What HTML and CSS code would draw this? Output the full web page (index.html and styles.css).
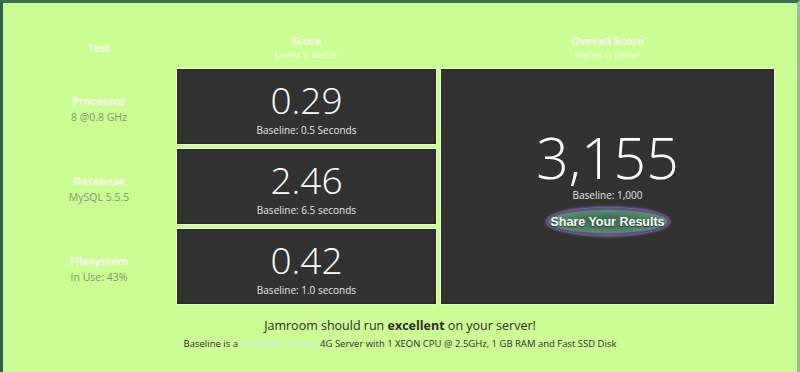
FILE: index.html
```html
<!DOCTYPE html>
<html lang="en">
<head>
  <meta charset="UTF-8" />
  <meta name="viewport" content="width=device-width, initial-scale=1.0"/>
  <title>Jamroom Benchmark</title>
  <link rel="stylesheet" href="styles.css">
</head>
<body>
  <div class="bench">
    <div class="head head-test">
      <div class="head-title">Test</div>
    </div>
    <div class="head">
      <div class="head-title">Score</div>
      <div class="head-sub">Lower Is Better</div>
    </div>
    <div class="head">
      <div class="head-title">Overall Score</div>
      <div class="head-sub">Higher Is Better</div>
    </div>

    <div class="test">
      <div class="test-name">Processor</div>
      <div class="test-info">8 @0.8 GHz</div>
    </div>
    <div class="card score">
      <div class="score-num">0.29</div>
      <div class="score-base">Baseline: 0.5 Seconds</div>
    </div>

    <div class="card overall">
      <div class="overall-num">3,155</div>
      <div class="overall-base">Baseline: 1,000</div>
      <button type="button" class="share">Share Your Results</button>
    </div>

    <div class="test">
      <div class="test-name">Database</div>
      <div class="test-info">MySQL 5.5.5</div>
    </div>
    <div class="card score">
      <div class="score-num">2.46</div>
      <div class="score-base">Baseline: 6.5 seconds</div>
    </div>

    <div class="test">
      <div class="test-name">Filesystem</div>
      <div class="test-info">In Use: 43%</div>
    </div>
    <div class="card score">
      <div class="score-num">0.42</div>
      <div class="score-base">Baseline: 1.0 seconds</div>
    </div>
  </div>

  <div class="summary">
    <p class="verdict">Jamroom should run <b>excellent</b> on your server!</p>
    <p class="note">Baseline is a <a href="#">Jamroom Hosting</a> 4G Server with 1 XEON CPU @ 2.5GHz, 1 GB RAM and Fast SSD Disk</p>
  </div>
</body>
</html>
```

FILE: styles.css
```css
* {
  box-sizing: border-box;
}

html, body {
  height: 100%;
}

body {
  margin: 0;
  font-family: 'Open Sans', 'Noto Sans', sans-serif;
  background-color: #ccfc94;
  border-top: 3px solid #3e6c52;
  border-left: 3px solid #2f5d45;
  border-right: 3px solid #a2b7a0;
}

.bench {
  display: grid;
  grid-template-columns: 170px 261px 335px;
  grid-template-rows: 62px 77px 77px 77px;
  gap: 3px;
}

.head {
  display: flex;
  flex-direction: column;
  align-items: center;
  justify-content: center;
  padding: 28px 0 2px;
  color: #f6ffec;
}

.head-test {
  padding-left: 22px;
}

.head-title {
  font-size: 11px;
  font-weight: bold;
  line-height: 15px;
}

.head-sub {
  font-size: 9px;
  line-height: 14px;
  color: #f2ffe6;
}

.test {
  display: flex;
  flex-direction: column;
  align-items: center;
  justify-content: center;
  padding: 4px 0 0 22px;
}

.test-name {
  font-size: 11px;
  font-weight: bold;
  line-height: 16px;
  color: #f6ffec;
}

.test-info {
  font-size: 10.5px;
  line-height: 16px;
  color: #7c9a6e;
}

.card {
  background-color: #323232;
  border: 1px solid #e6fdd0;
  box-shadow: inset 0 0 2px rgba(0, 0, 0, 0.6);
  color: #fff;
  text-align: center;
}

.score {
  padding-top: 11px;
}

.score-num {
  font-size: 37px;
  font-weight: 300;
  line-height: 40px;
}

.score-base {
  font-size: 10px;
  line-height: 14px;
  margin-top: 3px;
  color: #e6e6e6;
}

.overall {
  grid-column: 3;
  grid-row: 2 / span 3;
  display: flex;
  flex-direction: column;
  align-items: center;
  padding-top: 58px;
}

.overall-num {
  font-size: 57px;
  font-weight: 300;
  line-height: 60px;
}

.overall-base {
  font-size: 10px;
  line-height: 14px;
  margin-top: 1px;
  color: #e6e6e6;
}

.share {
  margin-top: 6px;
  width: 122px;
  height: 27px;
  padding: 0;
  border: 2px solid #5c5290;
  border-radius: 50%;
  background: radial-gradient(ellipse at center, #3f7258 30%, #5d8a72 70%, #a9bfb0 100%);
  box-shadow: 0 0 3px 1px #8b80c4;
  color: #fff;
  font-family: 'Liberation Sans', Arial, sans-serif;
  font-size: 12.5px;
  font-weight: bold;
  text-shadow: 0 1px 1px #1d3a2a;
  cursor: pointer;
}

.summary {
  text-align: center;
  color: #2e2e2e;
  padding-top: 11px;
}

.summary p {
  margin: 0;
}

.verdict {
  font-size: 12.5px;
  line-height: 20px;
}

.note {
  font-size: 9.5px;
  line-height: 16px;
}

.note a {
  color: #c6eef0;
  text-decoration: none;
}
```
